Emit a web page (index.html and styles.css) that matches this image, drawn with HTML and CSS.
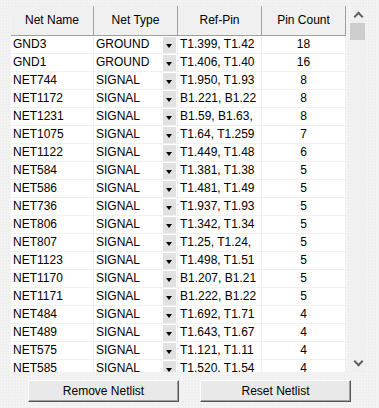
FILE: index.html
```html
<!DOCTYPE html>
<html lang="en">
<head>
    <meta charset="UTF-8">
    <title>Netlist</title>
    <link rel="stylesheet" href="styles.css">
</head>
<body>
    <div class="panel">
        <div class="grid-box">
            <div class="grid">
                <div class="row head">
                    <div class="cell">Net Name</div>
                    <div class="cell">Net Type</div>
                    <div class="cell">Ref-Pin</div>
                    <div class="cell">Pin Count</div>
                </div>
                <div id="rows"></div>
            </div>
            <div class="scrollbar">
                <div class="arrow up"></div>
                <div class="thumb"></div>
                <div class="track"></div>
                <div class="arrow down"></div>
            </div>
        </div>
        <div class="buttons">
            <button class="btn">Remove Netlist</button>
            <button class="btn">Reset Netlist</button>
        </div>
    </div>

    <script>
        var nets = [
            ["GND3", "GROUND", "T1.399, T1.42", 18],
            ["GND1", "GROUND", "T1.406, T1.40", 16],
            ["NET744", "SIGNAL", "T1.950, T1.93", 8],
            ["NET1172", "SIGNAL", "B1.221, B1.22", 8],
            ["NET1231", "SIGNAL", "B1.59, B1.63,", 8],
            ["NET1075", "SIGNAL", "T1.64, T1.259", 7],
            ["NET1122", "SIGNAL", "T1.449, T1.48", 6],
            ["NET584", "SIGNAL", "T1.381, T1.38", 5],
            ["NET586", "SIGNAL", "T1.481, T1.49", 5],
            ["NET736", "SIGNAL", "T1.937, T1.93", 5],
            ["NET806", "SIGNAL", "T1.342, T1.34", 5],
            ["NET807", "SIGNAL", "T1.25, T1.24,", 5],
            ["NET1123", "SIGNAL", "T1.498, T1.51", 5],
            ["NET1170", "SIGNAL", "B1.207, B1.21", 5],
            ["NET1171", "SIGNAL", "B1.222, B1.22", 5],
            ["NET484", "SIGNAL", "T1.692, T1.71", 4],
            ["NET489", "SIGNAL", "T1.643, T1.67", 4],
            ["NET575", "SIGNAL", "T1.121, T1.11", 4],
            ["NET585", "SIGNAL", "T1.520, T1.54", 4]
        ];

        var html = "";
        for (var i = 0; i < nets.length; i++) {
            var n = nets[i];
            html += '<div class="row">' +
                '<div class="cell">' + n[0] + '</div>' +
                '<div class="cell type"><span>' + n[1] + '</span><span class="drop"></span></div>' +
                '<div class="cell">' + n[2] + '</div>' +
                '<div class="cell count">' + n[3] + '</div>' +
                '</div>';
        }
        document.getElementById("rows").innerHTML = html;
    </script>
</body>
</html>
```

FILE: styles.css
```css
body {
    margin: 0;
    width: 379px;
    height: 408px;
    overflow: hidden;
    font-family: "Liberation Sans", Arial, sans-serif;
    font-size: 12px;
    color: #000;
    background-color: #f0f0f0;
    background-image: radial-gradient(circle, #fbfbfb 0.8px, transparent 1px);
    background-size: 3px 3px;
}
.panel {
    padding: 6px 12px 0 11px;
}
.grid-box {
    display: flex;
    height: 366px;
    overflow: hidden;
}
.grid {
    width: 335px;
    background-color: #fff;
    overflow: hidden;
}
.row {
    display: grid;
    grid-template-columns: 83px 84px 84px 84px;
    height: 18px;
    border-bottom: 1px solid #f0f0f0;
    box-sizing: border-box;
}
.cell {
    border-right: 1px solid #f0f0f0;
    padding: 0 2px;
    line-height: 17px;
    white-space: nowrap;
    overflow: hidden;
}
.head {
    height: 30px;
    background-color: #f0f0f0;
    border-bottom: 1px solid #a0a0a0;
}
.head .cell {
    border-right: 1px solid #a0a0a0;
    line-height: 29px;
    text-align: center;
}
.type {
    display: flex;
    justify-content: space-between;
    padding-right: 1px;
}
.drop {
    width: 13px;
    height: 16px;
    margin-top: 1px;
    background-color: #e1e1e1;
    position: relative;
}
.drop::after {
    content: "";
    position: absolute;
    left: 3px;
    top: 7px;
    border-left: 3.5px solid transparent;
    border-right: 3.5px solid transparent;
    border-top: 4px solid #000;
}
.count {
    text-align: center;
}
.scrollbar {
    width: 17px;
    margin-left: 4px;
    display: flex;
    flex-direction: column;
    background-color: #f0f0f0;
}
.arrow {
    height: 17px;
    position: relative;
}
.arrow::after {
    content: "";
    position: absolute;
    left: 5px;
    width: 5px;
    height: 5px;
    border-left: 2px solid #606060;
    border-top: 2px solid #606060;
}
.up::after {
    top: 7px;
    transform: rotate(45deg);
}
.down::after {
    top: 3px;
    transform: rotate(225deg);
}
.thumb {
    height: 17px;
    width: 15px;
    background-color: #cdcdcd;
}
.track {
    flex: 1;
}
.buttons {
    display: flex;
    gap: 21px;
    padding: 8px 0 0 17px;
}
.btn {
    width: 151px;
    height: 22px;
    font-family: "Liberation Sans", Arial, sans-serif;
    font-size: 12px;
    color: #000;
    background-color: #e9e9e9;
    border: 1px solid;
    border-color: #fff #555 #555 #fff;
    box-shadow: inset -1px -1px 0 #a0a0a0;
    padding: 0;
}
```
